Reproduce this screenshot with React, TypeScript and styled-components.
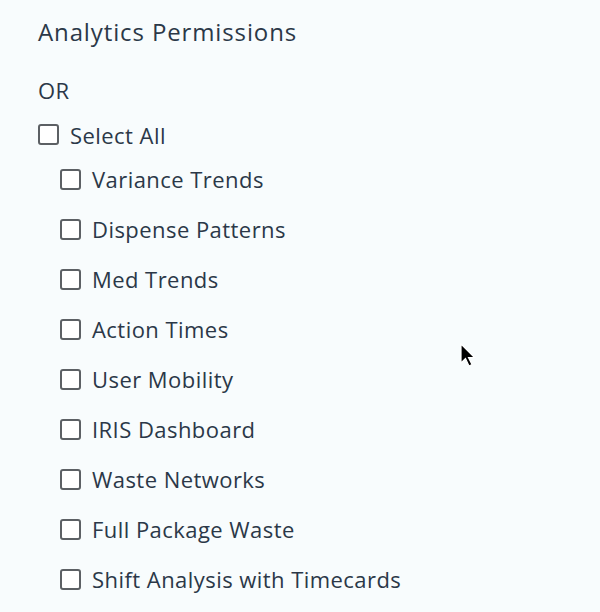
import React from "react";
import styled, { createGlobalStyle } from "styled-components";

const Global = createGlobalStyle`
  html, body { margin: 0; padding: 0; background: #f8fcfd; }
  body { font-family: "Open Sans", Lato, sans-serif; color: #2b3848; }
`;

const Page = styled.div`
  position: relative;
  width: 600px;
  height: 612px;
  overflow: hidden;
  padding: 16px 0 0 38px;
  box-sizing: border-box;
`;

const Title = styled.h2`
  margin: 0;
  font-size: 24px;
  font-weight: 500;
  line-height: 32px;
  letter-spacing: 0.88px;
`;

const Or = styled.div`
  margin-top: 28px;
  font-size: 22px;
  line-height: 28px;
  letter-spacing: 0.4px;
`;

const List = styled.div`
  display: flex;
  flex-direction: column;
  margin-top: 11px;
`;

const Row = styled.label<{ $indent?: boolean }>`
  display: flex;
  align-items: center;
  gap: 11px;
  height: 50px;
  padding-left: ${(p) => (p.$indent ? "22px" : "0")};
  font-size: 22px;
  letter-spacing: 0.45px;
  &:first-child { height: 39px; }
`;

const Box = styled.span`
  width: 17px;
  height: 17px;
  border: 2px solid #5c6064;
  border-radius: 3px;
  background: #fff;
  flex: none;
`;

const Cursor = styled.svg`
  position: absolute;
  left: 460px;
  top: 343px;
`;

const items = [
  "Variance Trends",
  "Dispense Patterns",
  "Med Trends",
  "Action Times",
  "User Mobility",
  "IRIS Dashboard",
  "Waste Networks",
  "Full Package Waste",
  "Shift Analysis with Timecards",
];

export default function App() {
  return (
    <Page>
      <Global />
      <Title>Analytics Permissions</Title>
      <Or>OR</Or>
      <List>
        <Row>
          <Box />
          Select All
        </Row>
        {items.map((t) => (
          <Row key={t} $indent>
            <Box />
            {t}
          </Row>
        ))}
      </List>
      <Cursor width="16" height="26" viewBox="0 0 16 26">
        <path d="M1 1 L1 20 L5.5 15.5 L9 23 L12 21.5 L8.5 14.5 L14.5 14.5 Z" fill="#000" stroke="#fff" strokeWidth="1.2" />
      </Cursor>
    </Page>
  );
}
